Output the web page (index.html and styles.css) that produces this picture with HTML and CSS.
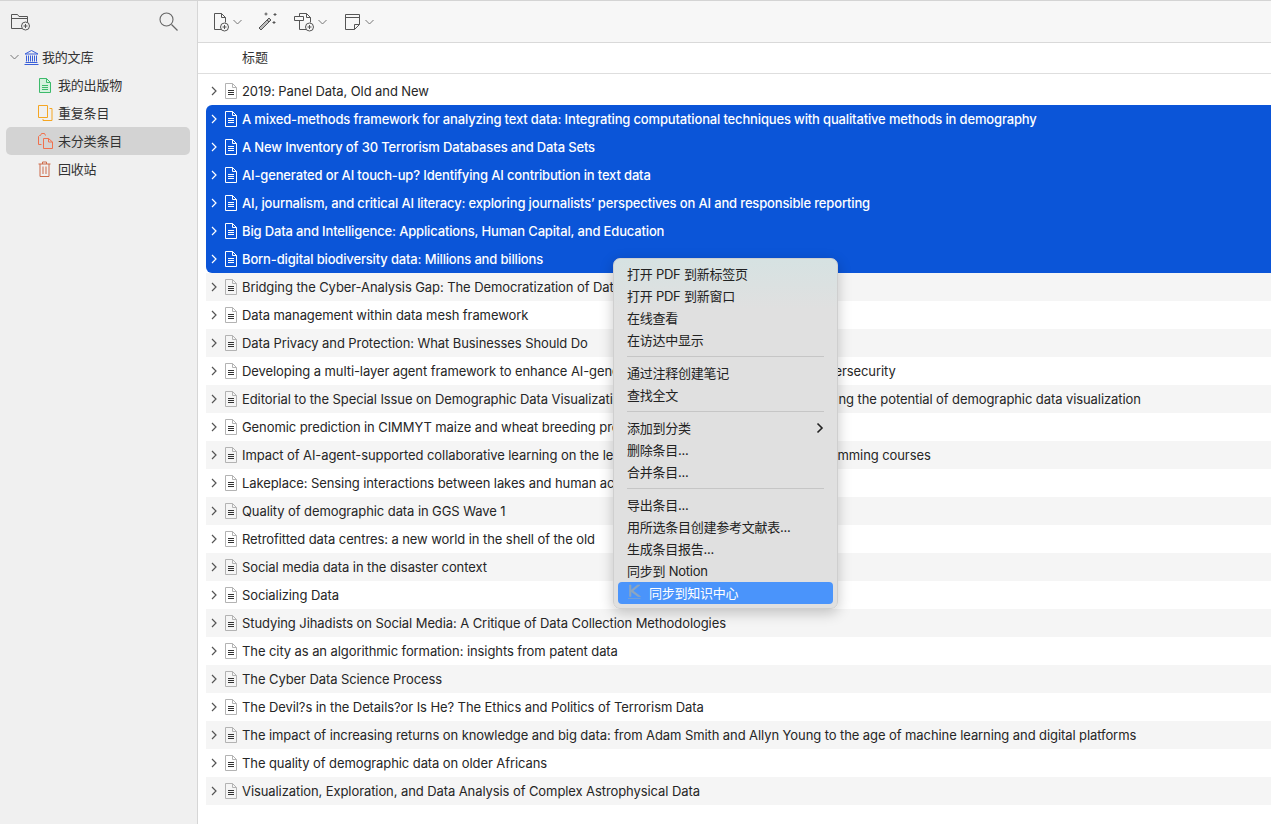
FILE: index.html
```html
<!DOCTYPE html>
<html lang="zh">
<head>
  <meta charset="UTF-8" />
  <title>Zotero</title>
  <link rel="stylesheet" href="styles.css">
</head>
<body>
  <svg class="defs" width="0" height="0">
    <symbol id="doc" viewBox="0 0 14 16">
      <path d="M1.500.5h7l4 4v11h-11z M8.500.5v4h4" fill="none" stroke="currentColor" stroke-width="1"/>
      <path d="M4 7.500h6M4 9.500h6M4 11.500h6" fill="none" stroke="var(--lines)" stroke-width="1"/>
    </symbol>
    <symbol id="arrow" viewBox="0 0 8 10">
      <path d="M2 1l4 4-4 4" fill="none" stroke="currentColor" stroke-width="1.200"/>
    </symbol>
    <symbol id="caret" viewBox="0 0 9 6">
      <path d="M.5 1l4 4 4-4" fill="none" stroke="#777" stroke-width="1"/>
    </symbol>
  </svg>

  <div class="app">
    <aside class="sidebar">
      <div class="side-tools">
        <svg class="tool-icon" width="22" height="20" viewBox="0 0 22 20">
          <path d="M12 17.500H1.500V3.500h6l1.500 2h8.500v6M1.500 7.500h16" fill="none" stroke="#555" stroke-width="1"/>
          <circle cx="15.500" cy="15" r="4" fill="#f0f0f0" stroke="#555"/>
          <path d="M13.500 15h4M15.500 13v4" stroke="#555"/>
        </svg>
        <svg class="tool-icon" width="19" height="19" viewBox="0 0 19 19">
          <circle cx="7.500" cy="7.500" r="6.500" fill="none" stroke="#666" stroke-width="1.100"/>
          <path d="M12.500 12.500l6 6" stroke="#666" stroke-width="1.300"/>
        </svg>
      </div>
      <ul class="tree">
        <li class="tree-row">
          <svg class="twisty" width="9" height="6"><use href="#caret"/></svg>
          <svg width="15" height="16" viewBox="0 0 15 16" class="lib-icon">
            <path d="M1 5L7.500 1.500 14 5zM2.500 6.500v6M4.500 6.500v6M6.500 6.500v6M8.500 6.500v6M10.500 6.500v6M12.500 6.500v6M1.500 13.500h12M.5 15.500h14" fill="none" stroke="#3a5fd9" stroke-width="1"/>
          </svg>
          <span>我的文库</span>
        </li>
        <li class="tree-row child">
          <svg width="14" height="15" viewBox="0 0 14 15">
            <path d="M1.500.5h7l4 4v10h-11z" fill="#d6f1df" stroke="#3dba6b"/>
            <path d="M8.500.5v4h4M4 7.500h6M4 9.500h6M4 11.500h6" fill="none" stroke="#3dba6b"/>
          </svg>
          <span>我的出版物</span>
        </li>
        <li class="tree-row child">
          <svg width="15" height="16" viewBox="0 0 15 16">
            <path d="M.5.500h9v12h-9z" fill="none" stroke="#f5a623"/>
            <path d="M11.500 3.500h2.500v12h-9v-1.500" fill="none" stroke="#f5a623"/>
          </svg>
          <span>重复条目</span>
        </li>
        <li class="tree-row child selected">
          <svg width="16" height="16" viewBox="0 0 16 16">
            <path d="M3.500 11.500h-3v-8l1-1h1l1-2h3l1 2" fill="none" stroke="#f0704d"/>
            <path d="M5.500 5.500h5l4 3.500v6.500h-9z M10.500 5.500v3.500h4" fill="none" stroke="#f0704d"/>
          </svg>
          <span>未分类条目</span>
        </li>
        <li class="tree-row child">
          <svg width="13" height="16" viewBox="0 0 13 16">
            <path d="M.5 3h12M4.500 3V1h4v2M2 3v12.500h9V3M5 5.500v7.500M8 5.500v7.500" fill="none" stroke="#cd6b4a"/>
          </svg>
          <span>回收站</span>
        </li>
      </ul>
    </aside>

    <main class="main">
      <div class="toolbar">
        <div class="tool">
          <svg width="20" height="20" viewBox="0 0 20 20">
            <path d="M9 17.500H2.500v-16h7l4 4v5M9.500 1.500v4h4" fill="none" stroke="#555"/>
            <circle cx="12.500" cy="15" r="4" fill="#f7f7f7" stroke="#555"/>
            <path d="M10.500 15h4M12.500 13v4" stroke="#555"/>
          </svg>
          <svg width="9" height="6"><use href="#caret"/></svg>
        </div>
        <div class="tool">
          <svg width="21" height="21" viewBox="0 0 21 21">
            <path d="M2 17l10-10 2 2-10 10z" fill="#bbb" stroke="#555"/>
            <path d="M10 9l2 2" stroke="#555"/>
            <path d="M9 1.500v3M7.500 3h3M18 2v3M16.500 3.500h3M17 10v3M15.500 11.500h3" stroke="#555"/>
          </svg>
        </div>
        <div class="tool">
          <svg width="24" height="20" viewBox="0 0 24 20">
            <path d="M13 17.500H6.500v-16h7l4 4v5M13.500 1.500v4h4" fill="none" stroke="#555"/>
            <path d="M1.500 4.500h9v4h-9z" fill="#f7f7f7" stroke="#555"/>
            <circle cx="16.500" cy="15" r="4" fill="#f7f7f7" stroke="#555"/>
            <path d="M14.500 15h4M16.500 13v4" stroke="#555"/>
          </svg>
          <svg width="9" height="6"><use href="#caret"/></svg>
        </div>
        <div class="tool tool-note">
          <svg width="16" height="18" viewBox="0 0 16 18">
            <path d="M.5 1.500h14v10l-5 5H.5z M9.500 16.500v-5h5M.5 4.500h14" fill="none" stroke="#555"/>
          </svg>
          <svg width="9" height="6"><use href="#caret"/></svg>
        </div>
      </div>

      <div class="col-head"><span>标题</span></div>

      <div class="rows">
        <div class="row"><svg class="arrow" width="8" height="10"><use href="#arrow"/></svg><svg class="doc" width="14" height="16"><use href="#doc"/></svg><span>2019: Panel Data, Old and New</span></div>
        <div class="row sel sel-first"><svg class="arrow" width="8" height="10"><use href="#arrow"/></svg><svg class="doc" width="14" height="16"><use href="#doc"/></svg><span>A mixed-methods framework for analyzing text data: Integrating computational techniques with qualitative methods in demography</span></div>
        <div class="row sel"><svg class="arrow" width="8" height="10"><use href="#arrow"/></svg><svg class="doc" width="14" height="16"><use href="#doc"/></svg><span>A New Inventory of 30 Terrorism Databases and Data Sets</span></div>
        <div class="row sel"><svg class="arrow" width="8" height="10"><use href="#arrow"/></svg><svg class="doc" width="14" height="16"><use href="#doc"/></svg><span>AI-generated or AI touch-up? Identifying AI contribution in text data</span></div>
        <div class="row sel"><svg class="arrow" width="8" height="10"><use href="#arrow"/></svg><svg class="doc" width="14" height="16"><use href="#doc"/></svg><span>AI, journalism, and critical AI literacy: exploring journalists’ perspectives on AI and responsible reporting</span></div>
        <div class="row sel"><svg class="arrow" width="8" height="10"><use href="#arrow"/></svg><svg class="doc" width="14" height="16"><use href="#doc"/></svg><span>Big Data and Intelligence: Applications, Human Capital, and Education</span></div>
        <div class="row sel sel-last"><svg class="arrow" width="8" height="10"><use href="#arrow"/></svg><svg class="doc" width="14" height="16"><use href="#doc"/></svg><span>Born-digital biodiversity data: Millions and billions</span></div>
        <div class="row"><svg class="arrow" width="8" height="10"><use href="#arrow"/></svg><svg class="doc" width="14" height="16"><use href="#doc"/></svg><span>Bridging the Cyber-Analysis Gap: The Democratization of Data Science</span></div>
        <div class="row"><svg class="arrow" width="8" height="10"><use href="#arrow"/></svg><svg class="doc" width="14" height="16"><use href="#doc"/></svg><span>Data management within data mesh framework</span></div>
        <div class="row"><svg class="arrow" width="8" height="10"><use href="#arrow"/></svg><svg class="doc" width="14" height="16"><use href="#doc"/></svg><span>Data Privacy and Protection: What Businesses Should Do</span></div>
        <div class="row"><svg class="arrow" width="8" height="10"><use href="#arrow"/></svg><svg class="doc" width="14" height="16"><use href="#doc"/></svg><span>Developing a multi-layer agent framework to enhance AI-generated threat intelligence use for cybersecurity</span></div>
        <div class="row"><svg class="arrow" width="8" height="10"><use href="#arrow"/></svg><svg class="doc" width="14" height="16"><use href="#doc"/></svg><span>Editorial to the Special Issue on Demographic Data Visualization: Getting the point along and realizing the potential of demographic data visualization</span></div>
        <div class="row"><svg class="arrow" width="8" height="10"><use href="#arrow"/></svg><svg class="doc" width="14" height="16"><use href="#doc"/></svg><span>Genomic prediction in CIMMYT maize and wheat breeding programs</span></div>
        <div class="row"><svg class="arrow" width="8" height="10"><use href="#arrow"/></svg><svg class="doc" width="14" height="16"><use href="#doc"/></svg><span>Impact of AI-agent-supported collaborative learning on the learning outcomes of university programming courses</span></div>
        <div class="row"><svg class="arrow" width="8" height="10"><use href="#arrow"/></svg><svg class="doc" width="14" height="16"><use href="#doc"/></svg><span>Lakeplace: Sensing interactions between lakes and human activity</span></div>
        <div class="row"><svg class="arrow" width="8" height="10"><use href="#arrow"/></svg><svg class="doc" width="14" height="16"><use href="#doc"/></svg><span>Quality of demographic data in GGS Wave 1</span></div>
        <div class="row"><svg class="arrow" width="8" height="10"><use href="#arrow"/></svg><svg class="doc" width="14" height="16"><use href="#doc"/></svg><span>Retrofitted data centres: a new world in the shell of the old</span></div>
        <div class="row"><svg class="arrow" width="8" height="10"><use href="#arrow"/></svg><svg class="doc" width="14" height="16"><use href="#doc"/></svg><span>Social media data in the disaster context</span></div>
        <div class="row"><svg class="arrow" width="8" height="10"><use href="#arrow"/></svg><svg class="doc" width="14" height="16"><use href="#doc"/></svg><span>Socializing Data</span></div>
        <div class="row"><svg class="arrow" width="8" height="10"><use href="#arrow"/></svg><svg class="doc" width="14" height="16"><use href="#doc"/></svg><span>Studying Jihadists on Social Media: A Critique of Data Collection Methodologies</span></div>
        <div class="row"><svg class="arrow" width="8" height="10"><use href="#arrow"/></svg><svg class="doc" width="14" height="16"><use href="#doc"/></svg><span>The city as an algorithmic formation: insights from patent data</span></div>
        <div class="row"><svg class="arrow" width="8" height="10"><use href="#arrow"/></svg><svg class="doc" width="14" height="16"><use href="#doc"/></svg><span>The Cyber Data Science Process</span></div>
        <div class="row"><svg class="arrow" width="8" height="10"><use href="#arrow"/></svg><svg class="doc" width="14" height="16"><use href="#doc"/></svg><span>The Devil?s in the Details?or Is He? The Ethics and Politics of Terrorism Data</span></div>
        <div class="row"><svg class="arrow" width="8" height="10"><use href="#arrow"/></svg><svg class="doc" width="14" height="16"><use href="#doc"/></svg><span>The impact of increasing returns on knowledge and big data: from Adam Smith and Allyn Young to the age of machine learning and digital platforms</span></div>
        <div class="row"><svg class="arrow" width="8" height="10"><use href="#arrow"/></svg><svg class="doc" width="14" height="16"><use href="#doc"/></svg><span>The quality of demographic data on older Africans</span></div>
        <div class="row"><svg class="arrow" width="8" height="10"><use href="#arrow"/></svg><svg class="doc" width="14" height="16"><use href="#doc"/></svg><span>Visualization, Exploration, and Data Analysis of Complex Astrophysical Data</span></div>
      </div>
    </main>
  </div>

  <div class="menu">
    <div class="item">打开 PDF 到新标签页</div>
    <div class="item">打开 PDF 到新窗口</div>
    <div class="item">在线查看</div>
    <div class="item">在访达中显示</div>
    <div class="sep"></div>
    <div class="item">通过注释创建笔记</div>
    <div class="item">查找全文</div>
    <div class="sep"></div>
    <div class="item">添加到分类<svg class="more" width="8" height="12" viewBox="0 0 8 12"><path d="M1.500 1.500L6 6l-4.500 4.500" fill="none" stroke="#222" stroke-width="1.600"/></svg></div>
    <div class="item">删除条目...</div>
    <div class="item">合并条目...</div>
    <div class="sep"></div>
    <div class="item">导出条目...</div>
    <div class="item">用所选条目创建参考文献表...</div>
    <div class="item">生成条目报告...</div>
    <div class="item">同步到 Notion</div>
    <div class="item active"><svg width="14" height="16" viewBox="0 0 14 16"><path d="M2.500 1v11.500H4V7.500L11 12.500h2.500L6 6.800 13 1h-2.500L4 6.300V1zM1 14.500h12.500" fill="#8fa6bd" stroke="#8fa6bd" stroke-width=".6"/></svg><span>同步到知识中心</span></div>
  </div>
</body>
</html>
```

FILE: styles.css
```css
* {
  box-sizing: border-box;
}
html, body {
  margin: 0;
  height: 100%;
  overflow: hidden;
}
body {
  font-family: Inter, "Noto Sans CJK SC", sans-serif;
  font-size: 13px;
  color: #262626;
  background: white;
}
.defs {
  display: block;
  height: 0;
}
.app {
  display: flex;
  height: 824px;
  border-top: 1px solid #d4d4d4;
}

/* left tree */
.sidebar {
  width: 198px;
  flex: none;
  background: #f0f0f0;
  border-right: 1px solid #d6d6d6;
  padding: 0 7px 0 6px;
}
.side-tools {
  height: 42px;
  display: flex;
  align-items: center;
  justify-content: space-between;
  padding: 0 12px 2px 4px;
}
.tree {
  list-style: none;
  margin: 0;
  padding: 0;
}
.tree-row {
  height: 28px;
  display: flex;
  align-items: center;
  gap: 3px;
  padding-left: 4px;
  border-radius: 5px;
  color: #333;
  letter-spacing: -0.2px;
}
.tree-row span {
  padding-bottom: 2px;
}
.tree-row .twisty {
  margin-right: 2px;
}
.tree-row.child {
  padding-left: 33px;
  position: relative;
}
.tree-row.child svg {
  position: absolute;
  left: 32px;
}
.tree-row.child span {
  margin-left: 19px;
}
.tree-row.selected {
  background: #d3d3d3;
}

/* right side */
.main {
  flex: 1;
  min-width: 0;
}
.toolbar {
  height: 42px;
  background: #f7f7f7;
  border-bottom: 1px solid #d9d9d9;
  display: flex;
  align-items: center;
  gap: 15px;
  padding-left: 14px;
}
.tool {
  display: flex;
  align-items: center;
  gap: 1px;
}
.tool-note {
  margin-left: 3px;
  gap: 4px;
}
.col-head {
  height: 31px;
  padding-left: 44px;
  display: flex;
  align-items: center;
  border-bottom: 1px solid #dedede;
  color: #333;
}
.col-head span {
  padding-bottom: 3px;
}
.rows {
  padding: 3px 0 0 8px;
}
.row {
  --lines: #333;
  height: 28px;
  display: flex;
  align-items: center;
  white-space: nowrap;
  overflow: hidden;
  color: #262626;
  letter-spacing: -0.085px;
}
.row:nth-child(even) {
  background: #f5f5f5;
}
.row .arrow {
  margin-left: 4px;
  color: #555;
  flex: none;
}
.row .doc {
  margin-left: 6px;
  color: #b3b3b3;
  flex: none;
}
.row span {
  margin-left: 4px;
}
.row.sel,
.row.sel:nth-child(even) {
  --lines: white;
  background: #0b55d8;
  color: white;
  font-weight: 500;
  letter-spacing: -0.155px;
}
.row.sel .arrow,
.row.sel .doc {
  color: white;
}
.row.sel-first {
  border-top-left-radius: 6px;
}
.row.sel-last {
  border-bottom-left-radius: 6px;
}

/* context menu */
.menu {
  position: absolute;
  left: 613px;
  top: 258px;
  width: 225px;
  height: 351px;
  padding: 4px;
  border-radius: 7px;
  background: linear-gradient(#d6e2e2, #e0e0e0 50px);
  border: 1px solid #cfcfcf;
  box-shadow: 0 4px 14px rgba(0, 0, 0, .22);
  color: #222;
  letter-spacing: -0.25px;
}
.item {
  height: 22px;
  display: flex;
  align-items: center;
  padding: 0 0 2px 9px;
  border-radius: 4px;
  position: relative;
}
.item .more {
  position: absolute;
  right: 9px;
  top: 5px;
}
.item.active {
  background: #4a94fb;
  color: white;
  gap: 8px;
}
.sep {
  height: 1px;
  margin: 5px 9px;
  background: #c6c6c6;
}
```
